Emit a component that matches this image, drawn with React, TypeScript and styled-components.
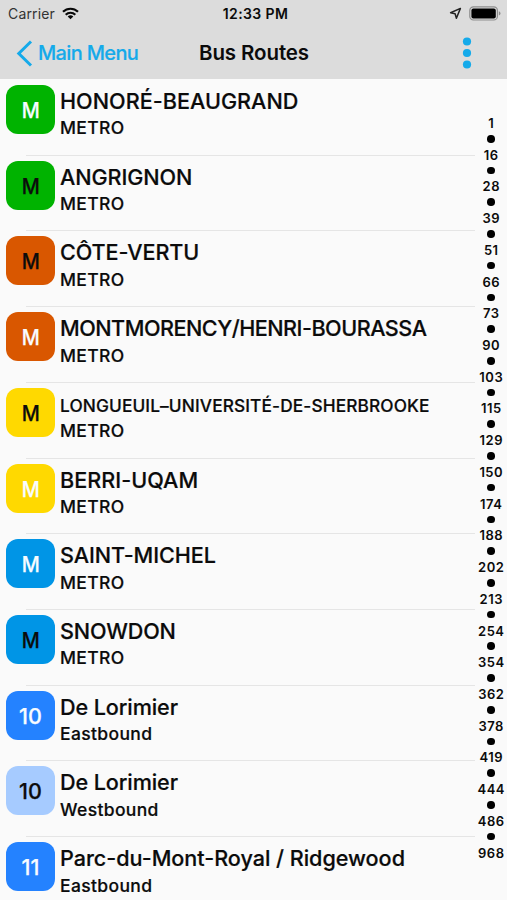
import React from "react";
import styled, { createGlobalStyle } from "styled-components";

const GlobalStyle = createGlobalStyle`
  * { box-sizing: border-box; }
  body {
    margin: 0;
    background: #fafafa;
    font-family: Inter, "Liberation Sans", sans-serif;
    color: #0b0b0b;
  }
`;

const Screen = styled.main`
  width: 507px;
  height: 900px;
  overflow: hidden;
  background: #fafafa;
`;

const Header = styled.header`
  height: 79px;
  background: #dcdcdc;
`;

const StatusBar = styled.div`
  display: grid;
  grid-template-columns: 1fr auto 1fr;
  align-items: center;
  height: 27px;
  padding: 0 6px 0 8px;
`;

const StatusGroup = styled.div`
  display: flex;
  align-items: center;
  gap: 7px;

  &:last-child {
    justify-content: flex-end;
  }
`;

const Carrier = styled.span`
  font-size: 14px;
  line-height: 27px;
  color: #333;
  letter-spacing: 0.15px;
`;

const Clock = styled.span`
  padding-left: 2px;
  font-size: 14px;
  font-weight: 600;
  line-height: 27px;
  letter-spacing: 0.4px;
`;

const NavBar = styled.nav`
  display: grid;
  grid-template-columns: 1fr auto 1fr;
  align-items: center;
  height: 51px;
  padding: 1px 15px 0 16px;
`;

const BackButton = styled.button`
  display: flex;
  align-items: center;
  gap: 5px;
  padding: 0;
  border: 0;
  background: none;
  font: 500 20px/50px Inter, sans-serif;
  letter-spacing: -0.65px;
  color: #15aaea;
  -webkit-text-stroke: 0.2px currentColor;
`;

const NavTitle = styled.h1`
  margin: 0;
  font-size: 20.5px;
  font-weight: 600;
  line-height: 50px;
  letter-spacing: -0.1px;
`;

const MenuButton = styled.button`
  display: flex;
  justify-self: end;
  padding: 0;
  margin: 0 20px 1px 0;
  border: 0;
  background: none;
`;

const Body = styled.div`
  display: flex;
  height: 821px;
`;

const RouteList = styled.ul`
  flex: 1;
  margin: 0;
  padding: 0;
  list-style: none;
`;

const RouteRow = styled.li`
  display: grid;
  grid-template-columns: 49px 1fr;
  column-gap: 5px;
  height: 75.73px;
  padding: 6px 0 0 6px;

  & + & {
    background: linear-gradient(#e5e5e5, #e5e5e5) 26px 0 / 100% 1px no-repeat;
  }
`;

const Badge = styled.div<{ $bg: string; $fg: string }>`
  height: 49px;
  border-radius: 12px;
  background: ${(p) => p.$bg};
  color: ${(p) => p.$fg};
  font-size: 21.5px;
  font-weight: 500;
  line-height: 50px;
  text-align: center;
`;

const BadgeCode = styled.span<{ $narrow: boolean }>`
  display: inline-block;
  -webkit-text-stroke: 0.25px currentColor;
  transform: scaleX(${(p) => (p.$narrow ? 0.92 : 1)});
`;

const RouteText = styled.div`
  display: flex;
  flex-direction: column;
  white-space: nowrap;
  -webkit-text-stroke: 0.2px currentColor;
`;

const RouteName = styled.span<{ $small?: boolean; $spacing: number }>`
  font-size: ${(p) => (p.$small ? 17.3 : 21.6)}px;
  font-weight: 500;
  line-height: 28px;
  height: 29.4px;
  padding-top: ${(p) => (p.$small ? 4.2 : 2)}px;
  letter-spacing: ${(p) => p.$spacing}px;
`;

const Direction = styled.span`
  font-size: 17.5px;
  font-weight: 500;
  line-height: 28px;
  letter-spacing: 0.35px;
`;

const IndexBar = styled.aside`
  display: flex;
  flex-direction: column;
  align-items: center;
  width: 32px;
  padding-top: 36px;
`;

const IndexLabel = styled.span`
  height: 15.87px;
  font-size: 13px;
  font-weight: 600;
  line-height: 16px;
  letter-spacing: 0.5px;
  margin-right: -0.5px;
`;

const IndexDot = styled.span`
  height: 15.87px;
  display: flex;
  align-items: center;

  &::before {
    content: "";
    width: 7.6px;
    height: 7.6px;
    border-radius: 50%;
    background: #000;
  }
`;

interface Route {
  code: string;
  name: string;
  direction: string;
  bg: string;
  fg: string;
  spacing: number;
  small?: boolean;
}

const WHITE = "#f8fcff";
const BLACK = "#0c0c0c";

const routes: Route[] = [
  { code: "M", name: "HONORÉ-BEAUGRAND", direction: "METRO", bg: "#00b300", fg: WHITE, spacing: 0.03 },
  { code: "M", name: "ANGRIGNON", direction: "METRO", bg: "#00b300", fg: BLACK, spacing: -0.1 },
  { code: "M", name: "CÔTE-VERTU", direction: "METRO", bg: "#d95700", fg: BLACK, spacing: -0.1 },
  { code: "M", name: "MONTMORENCY/HENRI-BOURASSA", direction: "METRO", bg: "#d95700", fg: WHITE, spacing: -0.5 },
  { code: "M", name: "LONGUEUIL–UNIVERSITÉ-DE-SHERBROOKE", direction: "METRO", bg: "#ffd900", fg: BLACK, spacing: 0.12, small: true },
  { code: "M", name: "BERRI-UQAM", direction: "METRO", bg: "#ffd900", fg: WHITE, spacing: 0.03 },
  { code: "M", name: "SAINT-MICHEL", direction: "METRO", bg: "#0095e6", fg: WHITE, spacing: -0.08 },
  { code: "M", name: "SNOWDON", direction: "METRO", bg: "#0095e6", fg: BLACK, spacing: -0.15 },
  { code: "10", name: "De Lorimier", direction: "Eastbound", bg: "#2482ff", fg: WHITE, spacing: -0.1 },
  { code: "10", name: "De Lorimier", direction: "Westbound", bg: "#a6cbff", fg: BLACK, spacing: -0.1 },
  { code: "11", name: "Parc-du-Mont-Royal / Ridgewood", direction: "Eastbound", bg: "#2482ff", fg: WHITE, spacing: -0.03 },
];

const indexLabels = [
  1, 16, 28, 39, 51, 66, 73, 90, 103, 115, 129, 150, 174, 188, 202, 213, 254, 354, 362, 378, 419, 444, 486, 968,
];

const WifiIcon = () => (
  <svg width="17" height="13" viewBox="0 0 17 13" fill="none" stroke="#080808" strokeWidth="2.2">
    <path d="M1 4.8a10.8 10.8 0 0 1 15 0" />
    <path d="M3.7 7.7a6.9 6.9 0 0 1 9.6 0" />
    <path d="M8.5 12.3 5.7 9.5a4 4 0 0 1 5.6 0Z" fill="#080808" stroke="none" />
  </svg>
);

const LocationIcon = () => (
  <svg width="13" height="13" viewBox="0 0 13 13" fill="none" stroke="#222" strokeWidth="1.5" strokeLinejoin="round">
    <path d="M11.4 1.4 1.6 5.7 6.1 6.8 7.4 11.2Z" />
  </svg>
);

const BatteryIcon = () => (
  <svg width="32" height="15" viewBox="0 0 32 15">
    <rect x=".8" y=".8" width="27.6" height="13.2" rx="3.6" fill="none" stroke="#8d8d8d" strokeWidth="1.2" />
    <rect x="2.4" y="2.4" width="24.4" height="10" rx="2" fill="#000" />
    <path d="M29.8 5.2q1.7.6 1.7 2.2t-1.7 2.2Z" fill="#8d8d8d" />
  </svg>
);

const BackIcon = () => (
  <svg width="17" height="27" viewBox="0 0 17 27" fill="none" stroke="#15aaea" strokeWidth="3">
    <path d="M15 1.5 2.8 13.5 15 25.5" />
  </svg>
);

const MoreIcon = () => (
  <svg width="10" height="32" viewBox="0 0 10 32" fill="#15aaea">
    <circle cx="5" cy="4.5" r="4.1" />
    <circle cx="5" cy="16" r="4.1" />
    <circle cx="5" cy="27.5" r="4.1" />
  </svg>
);

export default function App() {
  return (
    <Screen>
      <GlobalStyle />
      <Header>
        <StatusBar>
          <StatusGroup>
            <Carrier>Carrier</Carrier>
            <WifiIcon />
          </StatusGroup>
          <Clock>12:33 PM</Clock>
          <StatusGroup>
            <LocationIcon />
            <BatteryIcon />
          </StatusGroup>
        </StatusBar>
        <NavBar>
          <BackButton>
            <BackIcon />
            Main Menu
          </BackButton>
          <NavTitle>Bus Routes</NavTitle>
          <MenuButton aria-label="More">
            <MoreIcon />
          </MenuButton>
        </NavBar>
      </Header>
      <Body>
        <RouteList>
          {routes.map((r) => (
            <RouteRow key={r.code + r.name + r.direction}>
              <Badge $bg={r.bg} $fg={r.fg}>
                <BadgeCode $narrow={r.code === "M"}>{r.code}</BadgeCode>
              </Badge>
              <RouteText>
                <RouteName $small={r.small} $spacing={r.spacing}>{r.name}</RouteName>
                <Direction>{r.direction}</Direction>
              </RouteText>
            </RouteRow>
          ))}
        </RouteList>
        <IndexBar>
          {indexLabels.map((label, i) => (
            <React.Fragment key={label}>
              {i > 0 && <IndexDot />}
              <IndexLabel>{label}</IndexLabel>
            </React.Fragment>
          ))}
        </IndexBar>
      </Body>
    </Screen>
  );
}
